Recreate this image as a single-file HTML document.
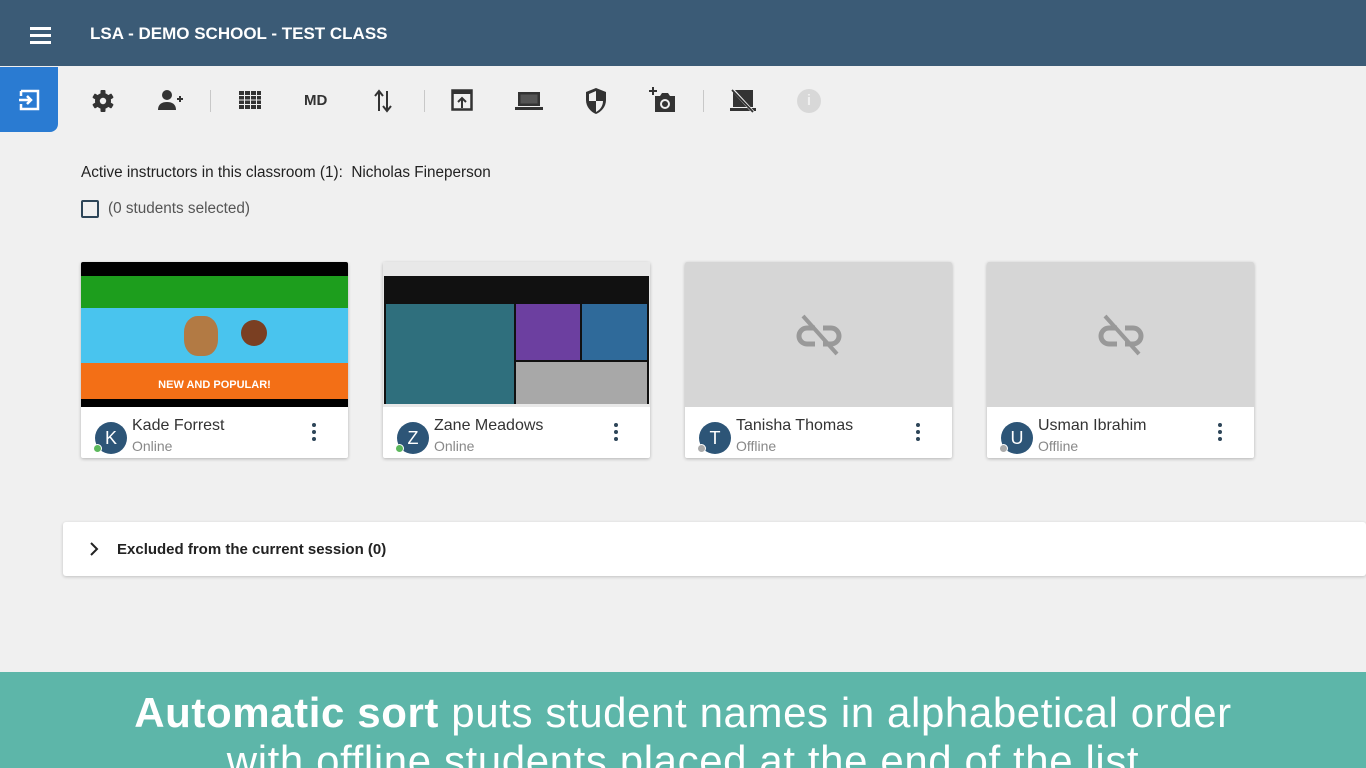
<!DOCTYPE html>
<html><head><meta charset="utf-8"><style>
*{box-sizing:border-box;margin:0;padding:0}
body{width:1366px;height:768px;overflow:hidden;background:#f0f0f0;font-family:"Liberation Sans",sans-serif;position:relative}
.hdr{position:absolute;left:0;top:0;width:1366px;height:66px;background:#3b5b76}
.hdr .t{position:absolute;left:90px;top:24px;color:#fff;font-size:17px;font-weight:bold}
.burger{position:absolute;left:30px;top:27px;width:21px}
.burger i{display:block;height:2.5px;background:#fff;margin-bottom:4.5px}
.login{position:absolute;left:0;top:67px;width:58px;height:65px;background:#2a7bd2;border-radius:0 0 8px 0}
.ic{position:absolute;top:88px}
.sep{position:absolute;top:90px;width:1px;height:22px;background:#c8c8c8}
.txt{position:absolute;color:#222;font-size:15.3px}
.card{position:absolute;top:262px;width:267px;height:196px;background:#fff;box-shadow:0 1px 3px rgba(0,0,0,.25);border-radius:2px;overflow:hidden}
.thumb{height:145px;background:#d6d6d6;position:relative}
.av{position:absolute;left:14px;top:160px;width:32px;height:32px;border-radius:50%;background:#2d5577;color:#fff;font-size:18px;text-align:center;line-height:32px}
.dot{position:absolute;left:12px;top:182px;width:9px;height:9px;border-radius:50%;border:1.5px solid #fff}
.nm{position:absolute;left:51px;top:155px;font-size:16px;color:#333}
.st{position:absolute;left:51px;top:176px;font-size:14px;color:#888}
.kb{position:absolute;left:231px;top:161px;width:4px}
.kb i{display:block;width:4px;height:4px;border-radius:50%;background:#2d4558;margin-bottom:3px}
.excl{position:absolute;left:63px;top:522px;width:1303px;height:54px;background:#fff;box-shadow:0 1px 3px rgba(0,0,0,.2);border-radius:3px}
.ban{position:absolute;left:0;top:672px;width:1366px;height:96px;overflow:hidden;background:#5db6a9;color:#fff;text-align:center;font-size:42px;letter-spacing:0.6px;line-height:48px;padding-top:17px;white-space:nowrap}
</style></head><body>
<div class="hdr"><div class="burger"><i></i><i></i><i></i></div><div class="t">LSA - DEMO SCHOOL - TEST CLASS</div></div>
<div class="login"><svg style="position:absolute;left:18px;top:22px" width="24" height="22" viewBox="0 0 24 22"><path d="M3 2h17v18H3v-5M3 7V2" fill="none" stroke="#fff" stroke-width="2.5"/><path d="M1 11h12M9 7l4 4-4 4" fill="none" stroke="#fff" stroke-width="2.5"/></svg></div>
<svg class="ic" style="left:91px;top:89px" width="24" height="24" viewBox="0 0 24 24"><g fill="#333"><circle cx="12" cy="12" r="8"/><g id="t"><rect x="9.5" y="1" width="5" height="5" rx="1"/><rect x="9.5" y="18" width="5" height="5" rx="1"/></g><use href="#t" transform="rotate(60 12 12)"/><use href="#t" transform="rotate(120 12 12)"/></g><circle cx="12" cy="12" r="3.2" fill="#f0f0f0"/></svg>
<svg class="ic" style="left:157px" width="28" height="24" viewBox="0 0 28 24"><circle cx="10" cy="7" r="5" fill="#333"/><path d="M1 22c0-6 4-8 9-8s9 2 9 8z" fill="#333"/><path d="M20 11h6M23 8v6" stroke="#333" stroke-width="2"/></svg>
<div class="sep" style="left:210px"></div>
<svg class="ic" style="left:239px;top:91px" width="22" height="18" viewBox="0 0 22 18"><g fill="#333"><rect x="0" y="0" width="5" height="4"/><rect x="6" y="0" width="5" height="4"/><rect x="12" y="0" width="5" height="4"/><rect x="18" y="0" width="4" height="4"/><rect x="0" y="5" width="5" height="3.5"/><rect x="6" y="5" width="5" height="3.5"/><rect x="12" y="5" width="5" height="3.5"/><rect x="18" y="5" width="4" height="3.5"/><rect x="0" y="9.5" width="5" height="3.5"/><rect x="6" y="9.5" width="5" height="3.5"/><rect x="12" y="9.5" width="5" height="3.5"/><rect x="18" y="9.5" width="4" height="3.5"/><rect x="0" y="14" width="5" height="4"/><rect x="6" y="14" width="5" height="4"/><rect x="12" y="14" width="5" height="4"/><rect x="18" y="14" width="4" height="4"/></g></svg>
<div class="txt" style="left:304px;top:92px;font-size:15px;font-weight:bold;color:#333">MD</div>
<svg class="ic" style="left:374px;top:89px" width="18" height="24" viewBox="0 0 18 24"><path d="M5 22V3M1 7l4-5 4 5M13 2v19M9 17l4 5 4-5" fill="none" stroke="#333" stroke-width="2"/></svg>
<div class="sep" style="left:424px"></div>
<svg class="ic" style="left:451px" width="22" height="24" viewBox="0 0 22 24"><rect x="1.5" y="2.5" width="19" height="19" fill="none" stroke="#333" stroke-width="2.5"/><rect x="1" y="2" width="20" height="4" fill="#333"/><path d="M11 20v-10M7 14l4-4 4 4" fill="none" stroke="#333" stroke-width="2"/></svg>
<svg class="ic" style="left:515px;top:91px" width="28" height="20" viewBox="0 0 28 20"><rect x="3" y="1" width="22" height="14" fill="#333"/><rect x="5.5" y="3.5" width="17" height="9" fill="#555"/><rect x="0" y="16" width="28" height="3" fill="#333"/></svg>
<svg class="ic" style="left:585px;top:87px" width="22" height="28" viewBox="0 0 22 28"><path d="M11 1l10 4v8c0 7-5 12-10 14C6 25 1 20 1 13V5z" fill="#333"/><path d="M11 4v10H4V7zM11 14h7c0 5-3 9-7 11z" fill="#f0f0f0"/></svg>
<svg class="ic" style="left:649px;top:86px" width="28" height="28" viewBox="0 0 28 28"><path d="M4 1v8M0 5h8" stroke="#333" stroke-width="2"/><path d="M6 10h5l2-3h6l2 3h5v16H6z" fill="#333"/><circle cx="16" cy="18" r="5" fill="#f0f0f0"/><circle cx="16" cy="18" r="3" fill="#333"/></svg>
<div class="sep" style="left:703px"></div>
<svg class="ic" style="left:729px;top:89px" width="28" height="24" viewBox="0 0 28 24"><rect x="4" y="1" width="20" height="17" fill="#333"/><rect x="1" y="19" width="26" height="3" fill="#333"/><path d="M3 0l22 24" stroke="#f0f0f0" stroke-width="3"/><path d="M3 1l21 22" stroke="#333" stroke-width="1.8"/></svg>
<div style="position:absolute;left:797px;top:89px;width:24px;height:24px;border-radius:50%;background:#d8d8d8;color:#f0f0f0;font-weight:bold;font-size:15px;text-align:center;line-height:24px">i</div>
<div class="txt" style="left:81px;top:164px">Active instructors in this classroom (1):&nbsp; Nicholas Fineperson</div>
<div style="position:absolute;left:81px;top:200px;width:18px;height:18px;border:2px solid #2d4558;border-radius:2px"></div>
<div class="txt" style="left:108px;top:200px;color:#555">(0 students selected)</div>

<div class="card" style="left:81px"><div class="thumb" style="background:#000">
<div style="position:absolute;top:14px;left:0;width:267px;height:32px;background:#1d9e1d"></div>
<div style="position:absolute;top:46px;left:0;width:267px;height:55px;background:#49c4ee"></div>
<div style="position:absolute;left:103px;top:54px;width:34px;height:40px;background:#b27a44;border-radius:40%"></div>
<div style="position:absolute;left:160px;top:58px;width:26px;height:26px;background:#7a3f22;border-radius:50%"></div>
<div style="position:absolute;top:101px;left:0;width:267px;height:36px;background:#f36f16;color:#fff;font-weight:bold;font-size:11px;text-align:center;line-height:44px">NEW AND POPULAR!</div>
</div><div class="av">K</div><div class="dot" style="background:#5cb85c"></div><div class="nm">Kade Forrest</div><div class="st">Online</div><div class="kb"><i></i><i></i><i></i></div></div>

<div class="card" style="left:383px"><div class="thumb" style="background:#e8e8e8">
<div style="position:absolute;top:14px;left:1px;width:265px;height:128px;background:#111"></div>
<div style="position:absolute;top:42px;left:3px;width:128px;height:100px;background:#2f6f7d"></div>
<div style="position:absolute;top:42px;left:133px;width:64px;height:56px;background:#6c3fa0"></div>
<div style="position:absolute;top:42px;left:199px;width:65px;height:56px;background:#2f6a9a"></div>
<div style="position:absolute;top:100px;left:133px;width:131px;height:42px;background:#a8a8a8"></div>
</div><div class="av">Z</div><div class="dot" style="background:#5cb85c"></div><div class="nm">Zane Meadows</div><div class="st">Online</div><div class="kb"><i></i><i></i><i></i></div></div>

<div class="card" style="left:685px"><div class="thumb"><svg style="position:absolute;left:110px;top:52px" width="48" height="42" viewBox="0 0 48 42"><path d="M20 14h-8a8 8 0 000 16h8M28 14h8a8 8 0 010 16h-8" fill="none" stroke="#999" stroke-width="5"/><path d="M8 2l34 38" stroke="#999" stroke-width="4"/></svg></div><div class="av">T</div><div class="dot" style="background:#aaa"></div><div class="nm">Tanisha Thomas</div><div class="st">Offline</div><div class="kb"><i></i><i></i><i></i></div></div>

<div class="card" style="left:987px"><div class="thumb"><svg style="position:absolute;left:110px;top:52px" width="48" height="42" viewBox="0 0 48 42"><path d="M20 14h-8a8 8 0 000 16h8M28 14h8a8 8 0 010 16h-8" fill="none" stroke="#999" stroke-width="5"/><path d="M8 2l34 38" stroke="#999" stroke-width="4"/></svg></div><div class="av">U</div><div class="dot" style="background:#aaa"></div><div class="nm">Usman Ibrahim</div><div class="st">Offline</div><div class="kb"><i></i><i></i><i></i></div></div>

<div class="excl"><svg style="position:absolute;left:26px;top:20px" width="10" height="14" viewBox="0 0 10 14"><path d="M2 1l6 6-6 6" fill="none" stroke="#222" stroke-width="2"/></svg><div style="position:absolute;left:54px;top:19px;font-size:15px;font-weight:bold;color:#222">Excluded from the current session (0)</div></div>

<div class="ban"><b>Automatic sort</b> puts student names in alphabetical order<br>with offline students placed at the end of the list</div>
</body></html>
